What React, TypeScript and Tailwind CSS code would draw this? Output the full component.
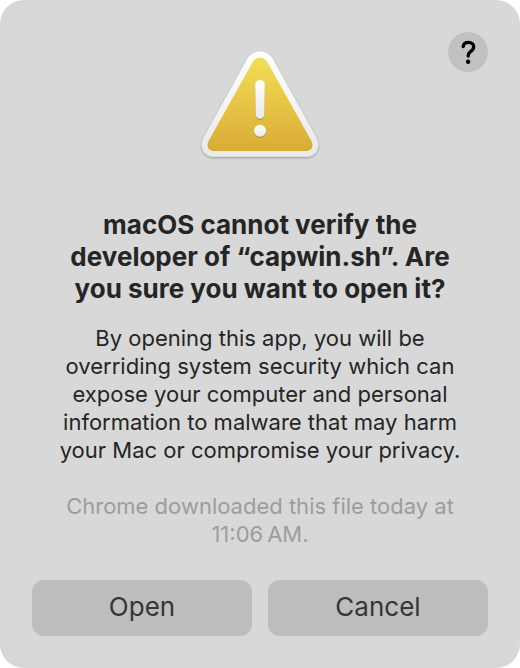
function WarningIcon() {
  return (
    <svg
      className="mx-auto size-32"
      viewBox="0 0 128 128"
      role="img"
      aria-label="Warning"
    >
      <defs>
        <linearGradient id="fill" x1="0" y1="0" x2="0" y2="1">
          <stop offset="0" stopColor="#f3de55" />
          <stop offset="0.5" stopColor="#e6c544" />
          <stop offset="1" stopColor="#d9ab36" />
        </linearGradient>
        <linearGradient id="rim" x1="0" y1="0" x2="0" y2="1">
          <stop offset="0" stopColor="#ffffff" />
          <stop offset="1" stopColor="#e9e9ea" />
        </linearGradient>
        <filter id="shadow" x="-10%" y="-10%" width="120%" height="125%">
          <feDropShadow dx="0" dy="1" stdDeviation="1" floodColor="#000" floodOpacity="0.35" />
        </filter>
        <filter id="markShadow" x="-50%" y="-20%" width="200%" height="150%">
          <feDropShadow dx="0" dy="1" stdDeviation="0.6" floodColor="#7a5a10" floodOpacity="0.6" />
        </filter>
      </defs>
      <path
        d="M51.5 18.5C57 9.300 71 9.300 76.500 18.500L120.300 97.500C125 107 120.500 116.700 110.500 116.700H17.500C7.500 116.700 3 107 7.700 97.500Z"
        fill="url(#rim)"
        filter="url(#shadow)"
      />
      <path
        d="M57 21.500C60.500 16 67.500 16 71 21.500L115.200 100.500C118.200 106.500 115.500 110.900 110 110.900H18C12.500 110.900 9.800 106.500 12.800 100.500Z"
        fill="url(#fill)"
      />
      <g fill="url(#rim)" filter="url(#markShadow)">
        <path d="M59.200 44.700C59.200 38.500 68.800 38.500 68.800 44.700L68.200 74.800C68.100 80 59.900 80 59.800 74.800Z" />
        <circle cx="64" cy="90.800" r="6" />
      </g>
    </svg>
  );
}

const buttonClass =
  "h-14 flex-1 rounded-xl bg-[#bdbdbd] pb-0.5 text-center text-[26px] leading-8 text-[#353535] active:bg-[#adadad]";

export default function App() {
  return (
    <div className="min-h-screen bg-white font-['Inter','Liberation_Sans',sans-serif]">
      <main
        role="alertdialog"
        aria-labelledby="title"
        aria-describedby="message"
        className="relative flex min-h-screen flex-col rounded-[24px] bg-[#d8d8d8] bg-linear-to-r from-[#d7d7d5] from-[20px] to-[#d8d8d8] to-[26px] px-8 pt-10 pb-8 text-center text-[#252525]"
      >
        <button
          type="button"
          aria-label="Help"
          className="absolute top-8 right-8 flex size-10 items-center justify-center rounded-full bg-[#c1c1c1] text-black"
        >
          <svg className="size-10" viewBox="0 0 40 40" fill="none" aria-hidden="true">
            <path
              d="M15.200 14.600C15.500 11.800 17.600 10.300 20.400 10.300C23.500 10.300 25.700 12 25.700 14.800C25.700 17 24.500 18.200 22.800 19.300C20.900 20.500 20.200 21.600 20.200 24"
              stroke="currentColor"
              strokeWidth="3.300"
              strokeLinecap="round"
              strokeLinejoin="round"
            />
            <circle cx="20.100" cy="29.800" r="2.200" fill="currentColor" />
          </svg>
        </button>

        <WarningIcon />

        <h1 id="title" className="mt-[41px] px-5 text-[26px] leading-8 font-bold">
          macOS cannot verify the developer of “capwin.sh”. Are you sure you want to open it?
        </h1>
        <p id="message" className="mt-[19px] px-5 text-[22px] leading-7">
          By opening this app, you will be overriding system security which can expose your
          computer and personal information to malware that may harm your Mac or compromise
          your privacy.
        </p>
        <p className="mt-7 px-5 text-[22px] leading-7 text-[#9d9d9d]">
          Chrome downloaded this file today at 11:06&#8239;AM.
        </p>

        <div className="mt-auto flex gap-4 pt-7">
          <button type="button" className={buttonClass}>
            Open
          </button>
          <button type="button" className={buttonClass}>
            Cancel
          </button>
        </div>
      </main>
    </div>
  );
}
